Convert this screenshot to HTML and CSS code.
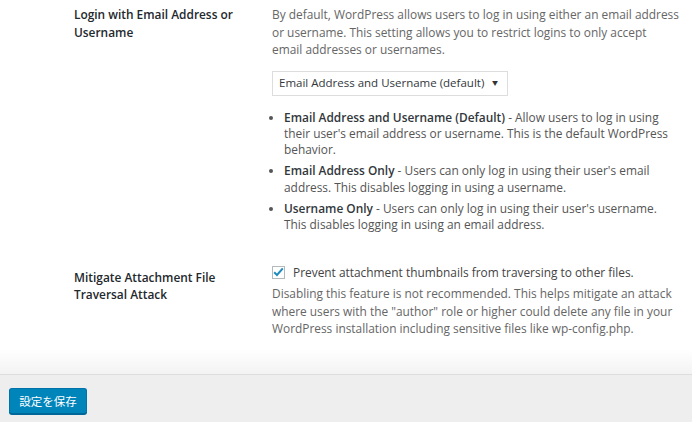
FILE: index.html
```html
<!DOCTYPE html>
<html lang="ja">
<head>
  <meta charset="UTF-8">
  <title>Settings</title>
  <link rel="stylesheet" href="styles.css">
</head>
<body>
  <div class="settings">
    <!-- Login -->
    <div class="row row-login">
      <div class="label">Login with Email Address or Username</div>
      <div class="field">
        <p class="description">By default, WordPress allows users to log in using either an email address or username. This setting allows you to restrict logins to only accept<br>email addresses or usernames.</p>
        <div class="select">
          <span>Email Address and Username (default)</span>
          <span class="arrow">&#9660;</span>
        </div>
        <ul class="options">
          <li><strong>Email Address and Username (Default)</strong> - Allow users to log in using their user's email address or username. This is the default WordPress behavior.</li>
          <li><strong>Email Address Only</strong> - Users can only log in using their user's email address. This disables logging in using a username.</li>
          <li><strong>Username Only</strong> - Users can only log in using their user's username. This disables logging in using an email address.</li>
        </ul>
      </div>
    </div>

    <!-- Attachment -->
    <div class="row row-attach">
      <div class="label">Mitigate Attachment File Traversal Attack</div>
      <div class="field">
        <label class="check">
          <span class="box">
            <svg width="11" height="10" viewBox="0 0 11 10"><path d="M1.2 5.2 L4 8 L9.8 1.4" fill="none" stroke="#1e8cbe" stroke-width="2"/></svg>
          </span>
          Prevent attachment thumbnails from traversing to other files.
        </label>
        <p class="description">Disabling this feature is not recommended. This helps mitigate an attack where users with the "author" role or higher could delete any file in your WordPress installation including sensitive files like wp-config.php.</p>
      </div>
    </div>
  </div>

  <div class="footer">
    <button class="button-primary">設定を保存</button>
  </div>
</body>
</html>
```

FILE: styles.css
```css
body {
  margin: 0;
  font-family: "Open Sans", "Noto Sans CJK JP", sans-serif;
  font-size: 11.9px;
  color: #444;
  background-color: #eee;
}

.settings {
  background-color: #fff;
  height: 350px;
  padding-left: 74px;
  position: relative;
}

.settings::after {
  content: "";
  position: absolute;
  left: 0;
  right: 0;
  top: 350px;
  height: 24px;
  background: linear-gradient(#fff, #f3f3f3);
  border-bottom: 1px solid #ddd;
}

.row {
  display: grid;
  grid-template-columns: 198px 1fr;
}

.row-login {
  padding-top: 6px;
}

.row-attach {
  padding-top: 26px;
}

.label {
  color: #23282d;
  font-weight: 600;
  line-height: 17.5px;
  width: 170px;
}

.row-attach .label {
  margin-top: 5px;
}

.field {
  padding-right: 10px;
}

.description {
  margin: 0;
  line-height: 17.5px;
  color: #666;
}

.select {
  display: flex;
  justify-content: space-between;
  align-items: center;
  width: 236px;
  height: 25px;
  box-sizing: border-box;
  margin-top: 12px;
  padding: 0 9px 1px 6px;
  border: 1px solid #ddd;
  font-size: 11.5px;
  color: #32373c;
  background-color: #fff;
}

.select .arrow {
  font-size: 6px;
  color: #333;
}

.options {
  margin: 13px 0 0 0;
  padding-left: 12px;
  line-height: 16.3px;
  color: #555;
}

.options li {
  margin-bottom: 5px;
}

.options strong {
  color: #32373c;
  font-weight: 600;
}

.check {
  display: flex;
  align-items: center;
  gap: 8px;
  line-height: 17.5px;
  color: #444;
  margin-bottom: 4px;
}

.box {
  width: 13px;
  height: 13px;
  box-sizing: border-box;
  border: 1px solid #b4b9be;
  display: flex;
  align-items: center;
  justify-content: center;
  background-color: #fff;
}

.footer {
  margin-top: 24px;
  padding: 14px 9px 0 9px;
  height: 48px;
}

.button-primary {
  font-family: "Noto Sans CJK JP", sans-serif;
  font-size: 11.5px;
  color: #fff;
  background-color: #0085ba;
  border: 1px solid #0073aa;
  border-bottom-color: #006799;
  border-radius: 3px;
  box-shadow: 0 1px 0 #006799;
  width: 78px;
  height: 26px;
  padding: 0;
  margin: 0;
}
```
